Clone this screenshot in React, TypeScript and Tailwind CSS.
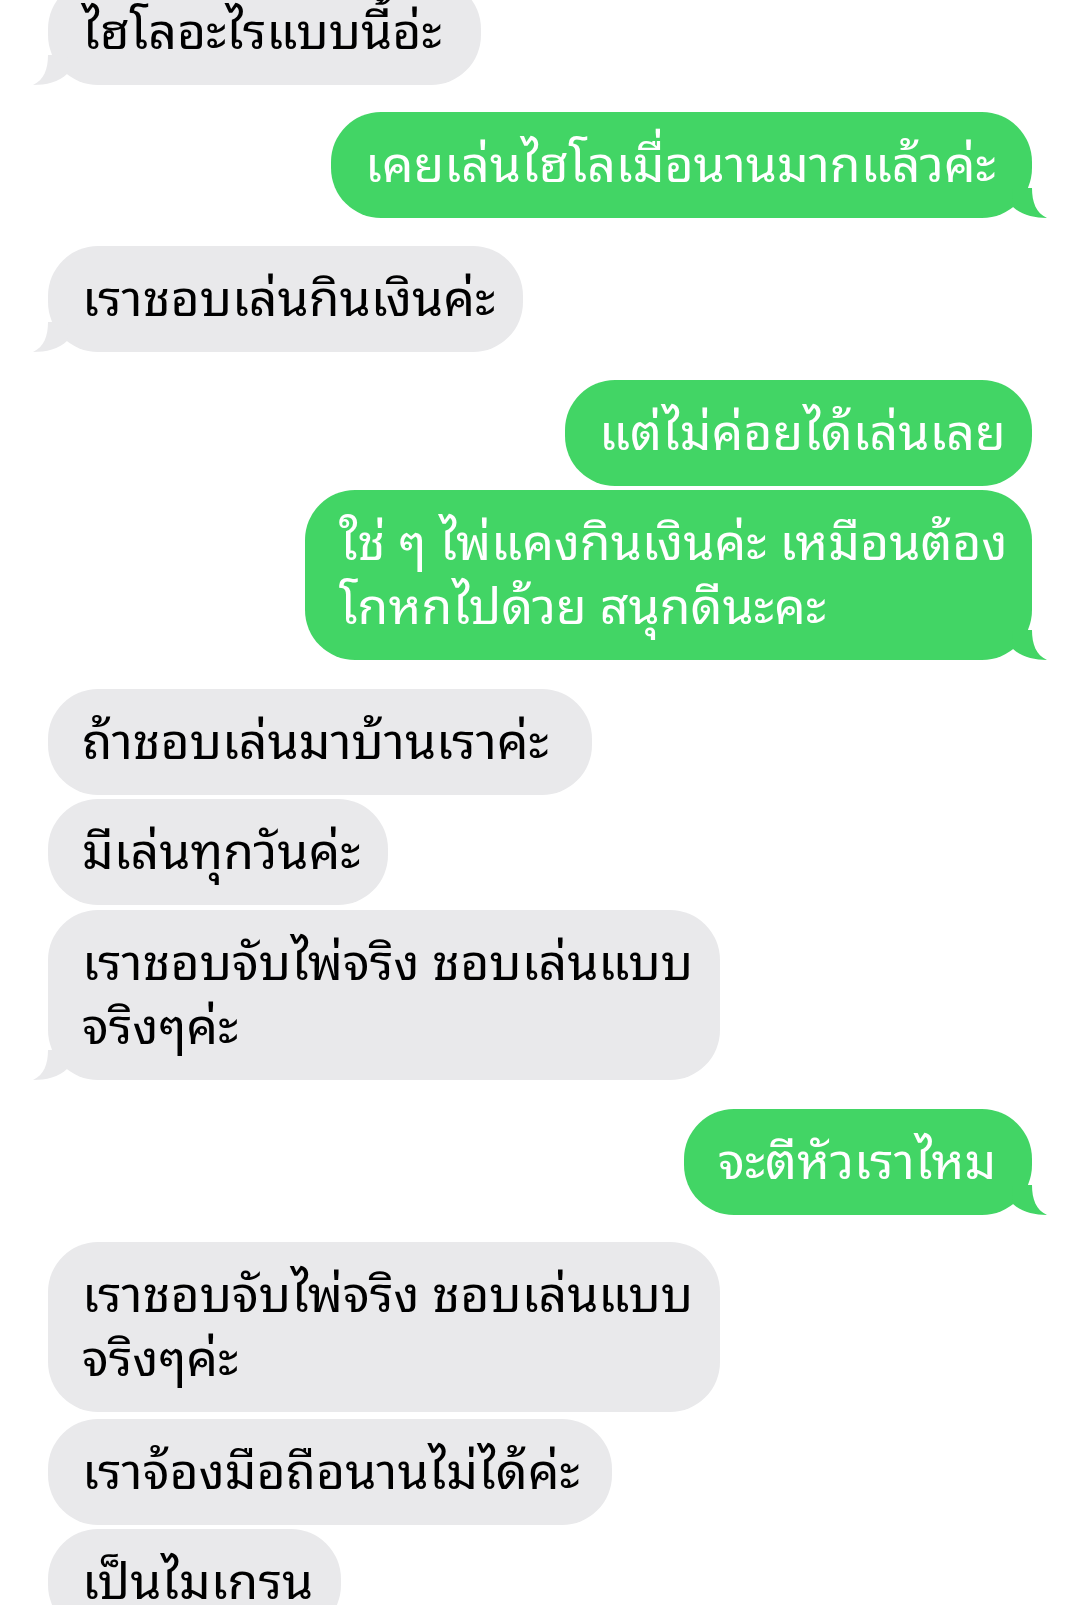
import React from "react";

type Msg = {
  side: "l" | "r";
  lines: string[];
  w: string;
  mt: string;
  tail: boolean;
};

const font = { fontFamily: '"Noto Sans Thai Looped", "Noto Sans Thai", sans-serif' };

function TailRight() {
  return (
    <svg
      className="absolute right-[-16px] bottom-0"
      width="36"
      height="30"
      viewBox="0 0 36 30"
    >
      <path d="M0 0 H20 C20 14 24 25 35 30 C22 30 9 27 1 19 Z" fill="#42d565" />
    </svg>
  );
}

function TailLeft() {
  return (
    <svg
      className="absolute left-[-16px] bottom-0"
      width="36"
      height="30"
      viewBox="0 0 36 30"
    >
      <path d="M36 0 H16 C16 14 12 25 1 30 C14 30 27 27 35 19 Z" fill="#e9e9eb" />
    </svg>
  );
}

function Bubble({ m }: { m: Msg }) {
  const isR = m.side === "r";
  return (
    <div className={`flex ${isR ? "justify-end" : "justify-start"} ${m.mt}`}>
      <div
        className={`relative ${m.w} rounded-[50px] px-[34px] py-[21px] text-[50px] leading-[64px] whitespace-nowrap ${
          isR ? "bg-[#42d565] text-white" : "bg-[#e9e9eb] text-black"
        }`}
        style={font}
      >
        {m.tail && (isR ? <TailRight /> : <TailLeft />)}
        <span className="relative top-[-5px]">
          {m.lines.map((l, i) => (
            <React.Fragment key={i}>
              {i > 0 && <br />}
              {l}
            </React.Fragment>
          ))}
        </span>
      </div>
    </div>
  );
}

const msgs: Msg[] = [
  { side: "l", lines: ["ไฮโลอะไรแบบนี้อ่ะ"], w: "w-[433px]", mt: "mt-[-21px]", tail: true },
  { side: "r", lines: ["เคยเล่นไฮโลเมื่อนานมากแล้วค่ะ"], w: "w-[701px]", mt: "mt-[27px]", tail: true },
  { side: "l", lines: ["เราชอบเล่นกินเงินค่ะ"], w: "w-[475px]", mt: "mt-[28px]", tail: true },
  { side: "r", lines: ["แต่ไม่ค่อยได้เล่นเลย"], w: "w-[467px]", mt: "mt-[28px]", tail: false },
  { side: "r", lines: ["ใช่ ๆ ไพ่แคงกินเงินค่ะ เหมือนต้อง", "โกหกไปด้วย สนุกดีนะคะ"], w: "w-[727px]", mt: "mt-[4px]", tail: true },
  { side: "l", lines: ["ถ้าชอบเล่นมาบ้านเราค่ะ"], w: "w-[544px]", mt: "mt-[29px]", tail: false },
  { side: "l", lines: ["มีเล่นทุกวันค่ะ"], w: "w-[340px]", mt: "mt-[4px]", tail: false },
  { side: "l", lines: ["เราชอบจับไพ่จริง ชอบเล่นแบบ", "จริงๆค่ะ"], w: "w-[672px]", mt: "mt-[5px]", tail: true },
  { side: "r", lines: ["จะตีหัวเราไหม"], w: "w-[348px]", mt: "mt-[29px]", tail: true },
  { side: "l", lines: ["เราชอบจับไพ่จริง ชอบเล่นแบบ", "จริงๆค่ะ"], w: "w-[672px]", mt: "mt-[27px]", tail: false },
  { side: "l", lines: ["เราจ้องมือถือนานไม่ได้ค่ะ"], w: "w-[564px]", mt: "mt-[7px]", tail: false },
  { side: "l", lines: ["เป็นไมเกรน"], w: "w-[293px]", mt: "mt-[4px]", tail: false },
];

export default function App() {
  return (
    <div className="w-[1080px] h-[1605px] overflow-hidden bg-white">
      <div className="flex flex-col px-[48px]">
        {msgs.map((m, i) => (
          <Bubble key={i} m={m} />
        ))}
      </div>
    </div>
  );
}
